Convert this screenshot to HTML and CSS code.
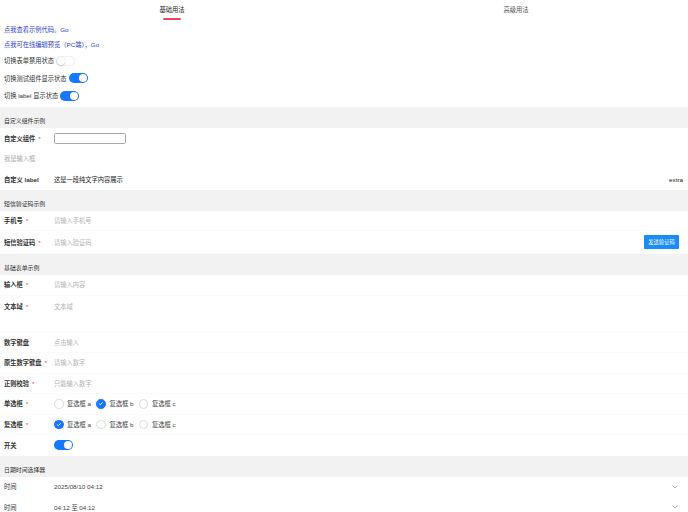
FILE: index.html
```html
<!DOCTYPE html>
<html lang="zh">
<head>
<meta charset="utf-8">
<title>Form</title>
<link rel="stylesheet" href="styles.css">
</head>
<body>
<div class="tabs">
  <div class="tab active"><span class="tab-text">基础用法</span><span class="tab-line"></span></div>
  <div class="tab"><span class="tab-text">高级用法</span></div>
</div>

<div class="intro">
  <div class="link-row"><a class="link">点我查看示例代码。Go</a></div>
  <div class="link-row"><a class="link">点我可在线编辑预览（PC端），Go</a></div>
  <div class="toggle-row"><span>切换表单禁用状态</span><span class="switch off"><span class="knob"></span></span></div>
  <div class="toggle-row"><span>切换测试组件显示状态</span><span class="switch"><span class="knob"></span></span></div>
  <div class="toggle-row"><span>切换 label 显示状态</span><span class="switch"><span class="knob"></span></span></div>
</div>

<section class="group">
  <div class="group-title">自定义组件示例</div>
  <div class="cell"><div class="label req">自定义组件</div><div class="value"><span class="box"></span></div></div>
  <div class="cell"><div class="hint">我是输入框</div></div>
  <div class="cell"><div class="label">自定义 label</div><div class="value text">这是一段纯文字内容展示</div><div class="extra">extra</div></div>
</section>

<section class="group">
  <div class="group-title">短信验证码示例</div>
  <div class="cell line"><div class="label req">手机号</div><div class="value ph">请输入手机号</div></div>
  <div class="cell tall line"><div class="label req">短信验证码</div><div class="value ph">请输入验证码</div><button class="send">发送验证码</button></div>
</section>

<section class="group">
  <div class="group-title">基础表单示例</div>
  <div class="cell line"><div class="label req">输入框</div><div class="value ph">请输入内容</div></div>
  <div class="cell area line"><div class="label req">文本域</div><div class="value ph">文本域</div></div>
  <div class="cell line"><div class="label">数字键盘</div><div class="value ph">点击输入</div></div>
  <div class="cell line"><div class="label req">原生数字键盘</div><div class="value ph">请输入数字</div></div>
  <div class="cell line"><div class="label req">正则校验</div><div class="value ph">只能输入数字</div></div>
  <div class="cell line"><div class="label req">单选框</div>
    <div class="value opts">
      <span class="opt"><span class="circle"></span>复选框 a</span>
      <span class="opt"><span class="circle on"><svg viewBox="0 0 10 10" width="10" height="10"><polyline points="2.8,5.2 4.4,6.7 7.3,3.6" fill="none" stroke="#fff" stroke-width="1.1" stroke-linecap="round" stroke-linejoin="round"/></svg></span>复选框 b</span>
      <span class="opt"><span class="circle"></span>复选框 c</span>
    </div>
  </div>
  <div class="cell line"><div class="label req">复选框</div>
    <div class="value opts">
      <span class="opt"><span class="circle on"><svg viewBox="0 0 10 10" width="10" height="10"><polyline points="2.8,5.2 4.4,6.7 7.3,3.6" fill="none" stroke="#fff" stroke-width="1.1" stroke-linecap="round" stroke-linejoin="round"/></svg></span>复选框 a</span>
      <span class="opt"><span class="circle"></span>复选框 b</span>
      <span class="opt"><span class="circle"></span>复选框 c</span>
    </div>
  </div>
  <div class="cell"><div class="label">开关</div><div class="value"><span class="switch"><span class="knob"></span></span></div></div>
</section>

<section class="group">
  <div class="group-title">日期时间选择器</div>
  <div class="cell"><div class="label normal">时间</div><div class="value date">2025/08/10 04:12</div><svg class="chev" viewBox="0 0 6 4" width="6" height="4"><polyline points="0.6,0.8 3,3 5.4,0.8" fill="none" stroke="#a0a0a0" stroke-width="0.8"/></svg></div>
  <div class="cell"><div class="label normal">时间</div><div class="value date">04:12 至 04:12</div><svg class="chev" viewBox="0 0 6 4" width="6" height="4"><polyline points="0.6,0.8 3,3 5.4,0.8" fill="none" stroke="#a0a0a0" stroke-width="0.8"/></svg></div>
</section>
</body>
</html>
```

FILE: styles.css
```css
* { box-sizing: border-box; }
html, body {
  margin: 0;
  padding: 0;
  background: #fff;
  font-family: "Liberation Sans", "Noto Sans CJK SC", sans-serif;
  font-size: 6.25px;
  color: #333;
  overflow: hidden;
}

.tabs {
  display: flex;
  height: 20px;
}
.tab {
  flex: 1;
  display: flex;
  flex-direction: column;
  align-items: center;
  padding-top: 5px;
  color: #555;
}
.tab.active { color: #222; }
.tab-line {
  display: block;
  width: 18px;
  height: 1.5px;
  margin-top: 4px;
  background: #e9485a;
  border-radius: 1px;
}

.intro {
  padding: 2px 4px 2.5px;
}
.link-row {
  height: 15px;
  display: flex;
  align-items: center;
}
.link {
  color: #2f3fcc;
  text-decoration: none;
}
.toggle-row {
  height: 17.5px;
  display: flex;
  align-items: center;
  gap: 2px;
  color: #333;
}

.switch {
  display: inline-flex;
  justify-content: flex-end;
  align-items: center;
  width: 19px;
  height: 10px;
  border-radius: 5px;
  background: #1677ff;
  padding: 1px;
}
.switch .knob {
  width: 8px;
  height: 8px;
  border-radius: 50%;
  background: #fff;
}
.switch.off {
  justify-content: flex-start;
  background: #fff;
  box-shadow: inset 0 0 0 0.6px #e6e6e6;
}
.switch.off .knob {
  box-shadow: 0 0.5px 1.5px rgba(0,0,0,0.3);
}

.group-title {
  height: 21px;
  background: #f2f2f2;
  display: flex;
  align-items: flex-end;
  padding: 0 4px 3px;
  font-size: 5.9px;
  color: #333;
}

.cell {
  height: 20.5px;
  display: flex;
  align-items: center;
  padding: 0 4px;
}
.cell.line { border-bottom: 0.5px solid #fbfbfb; }
.cell.tall { height: 23px; }
.cell.area {
  height: 37px;
  align-items: flex-start;
  padding-top: 6px;
}
.label {
  width: 50px;
  flex: none;
  font-weight: 700;
  color: #333;
}
.label.normal { font-weight: 400; }
.label.req::after {
  content: "*";
  color: #e8384f;
  margin-left: 3px;
  font-weight: 400;
}
.value {
  flex: 1;
  display: flex;
  align-items: center;
}
.ph { color: #b3b3b3; }
.text { color: #222; }
.date { color: #444; }
.hint { color: #aaa; }
.extra { color: #222; margin-right: 1px; }

.box {
  display: block;
  width: 72px;
  height: 11.5px;
  border: 0.8px solid #a8a8a8;
  border-radius: 1.5px;
  background: #fff;
}

.send {
  width: 35px;
  height: 14px;
  border: none;
  border-radius: 1px;
  background: #1a8cfa;
  color: #fff;
  font-family: inherit;
  font-size: 5.3px;
  padding: 0;
  margin-right: 5px;
}

.opts { gap: 5.5px; color: #444; }
.opt {
  display: inline-flex;
  align-items: center;
  gap: 3.5px;
}
.circle {
  width: 9.5px;
  height: 9.5px;
  border-radius: 50%;
  border: 0.6px solid #dcdcdc;
  display: inline-flex;
  align-items: center;
  justify-content: center;
  background: #fff;
}
.circle.on {
  background: #1677ff;
  border-color: #1677ff;
}
.circle svg { width: 9px; height: 9px; }

.chev {
  margin-right: 6px;
  flex: none;
}
```
